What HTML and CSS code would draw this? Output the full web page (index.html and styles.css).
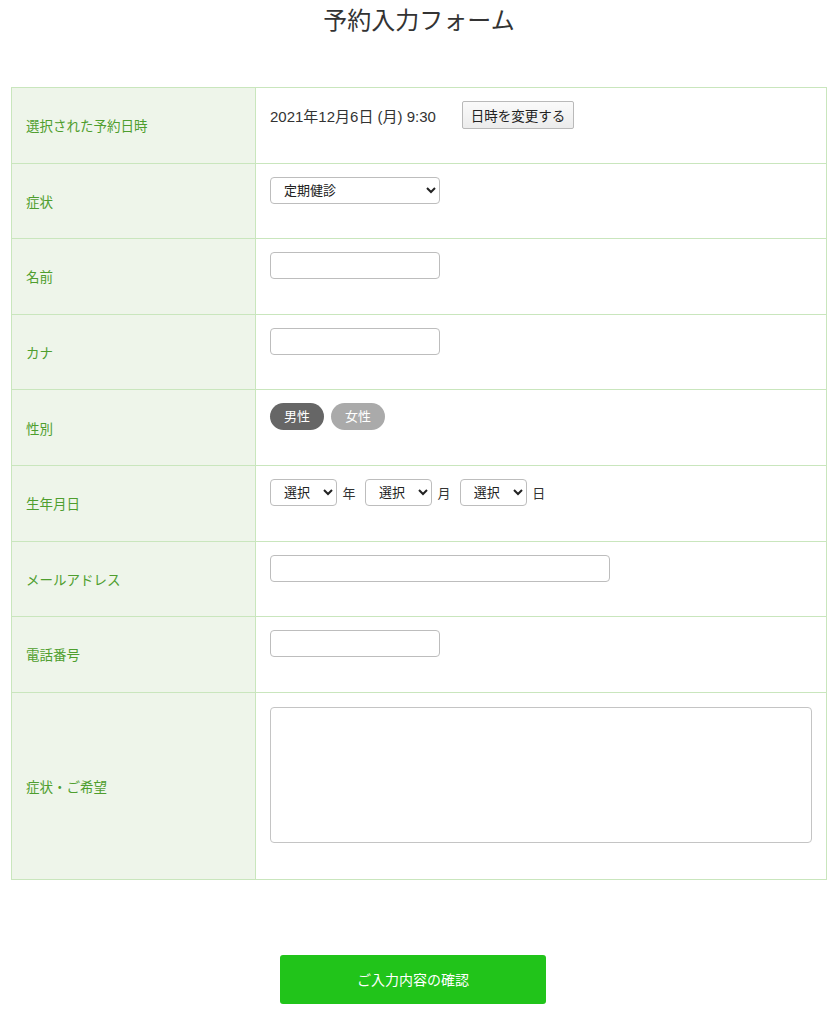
FILE: index.html
```html
<!DOCTYPE html>
<html lang="ja">
<head>
  <meta charset="UTF-8" />
  <title>予約入力フォーム</title>
  <link rel="stylesheet" href="styles.css">
</head>
<body>
  <div class="page">
    <h1>予約入力フォーム</h1>
    <form id="reserve-form">
      <table class="form-table">
        <colgroup>
          <col class="col-label" />
          <col />
        </colgroup>
        <tr>
          <th>選択された予約日時</th>
          <td>
            <span class="date">2021年12月6日 (月) 9:30</span>
            <button type="button" class="change-btn">日時を変更する</button>
          </td>
        </tr>
        <tr>
          <th>症状</th>
          <td>
            <select name="symptom" class="field">
              <option>定期健診</option>
              <option>虫歯</option>
              <option>歯周病</option>
            </select>
          </td>
        </tr>
        <tr>
          <th>名前</th>
          <td><input name="name" class="field" /></td>
        </tr>
        <tr>
          <th>カナ</th>
          <td><input name="kana" class="field" /></td>
        </tr>
        <tr>
          <th>性別</th>
          <td>
            <span class="pill active">男性</span>
            <span class="pill">女性</span>
          </td>
        </tr>
        <tr>
          <th>生年月日</th>
          <td>
            <select name="year" class="small"><option>選択</option></select><span class="unit">年</span>
            <select name="month" class="small"><option>選択</option></select><span class="unit">月</span>
            <select name="day" class="small"><option>選択</option></select><span class="unit">日</span>
          </td>
        </tr>
        <tr>
          <th>メールアドレス</th>
          <td><input name="email" class="field wide" /></td>
        </tr>
        <tr>
          <th>電話番号</th>
          <td><input name="tel" class="field" /></td>
        </tr>
        <tr class="tall">
          <th>症状・ご希望</th>
          <td><textarea name="note"></textarea></td>
        </tr>
      </table>
      <button type="submit" class="submit-btn">ご入力内容の確認</button>
    </form>
  </div>
</body>
</html>
```

FILE: styles.css
```css
body { margin: 0; font-family: "Liberation Sans", "Noto Sans CJK JP", sans-serif; color: #333; background: #fff; }
.page { width: 816px; margin-left: 11px; }
h1 { margin: 0; padding-top: 4px; font-size: 24px; font-weight: normal; line-height: 34px; text-align: center; color: #333; }
.form-table { width: 100%; margin-top: 49px; border-collapse: collapse; table-layout: fixed; }
.col-label { width: 244px; }
.form-table th, .form-table td { border: 1px solid #c9e6bd; height: 46.6px; }
.form-table th { background: #eef5ea; color: #4e9e2e; font-size: 13.5px; font-weight: normal; text-align: left; padding: 0 14px; vertical-align: middle; }
.form-table td { padding: 13px 14px 15px 14px; vertical-align: top; font-size: 14px; }
.form-table .tall td, .form-table .tall th { height: 158px; }
.date { display: inline-block; vertical-align: middle; margin-right: 22px; font-size: 15px; }
.change-btn { vertical-align: middle; height: 28px; padding: 0 8px; font-size: 13.5px; font-family: inherit; color: #222; background: linear-gradient(#fafafa, #ececec); border: 1px solid #b9b9b9; border-radius: 2px; }
.field { box-sizing: border-box; width: 170px; height: 27px; border: 1px solid #bdbdbd; border-radius: 4px; background: #fff; font-size: 13px; font-family: inherit; padding: 0 8px; margin: 0; vertical-align: top; }
select.field { padding: 0 6px 0 9px; color: #222; }
.field.wide { width: 340px; }
.small { box-sizing: border-box; width: 67px; height: 27px; border: 1px solid #bdbdbd; border-radius: 4px; background: #fff; font-size: 13px; font-family: inherit; padding: 0 4px 0 9px; color: #222; vertical-align: middle; }
.unit { display: inline-block; width: 24px; text-align: center; font-size: 13px; vertical-align: middle; }
.pill { display: inline-block; width: 54px; height: 27px; line-height: 27px; border-radius: 14px; background: #aaa; color: #fff; font-size: 13px; text-align: center; margin-right: 3px; }
.pill.active { background: #666; }
textarea { display: block; box-sizing: border-box; width: 100%; height: 136px; margin-top: 1px; border: 1px solid #c4c4c4; border-radius: 4px; resize: none; font-family: inherit; }
.submit-btn { display: block; width: 266px; height: 49px; margin: 75px 0 0 269px; background: #21c41a; color: #fff; border: none; border-radius: 3px; font-size: 14px; font-family: inherit; cursor: pointer; }
.submit-btn:hover { background: #1aab14; }
```
